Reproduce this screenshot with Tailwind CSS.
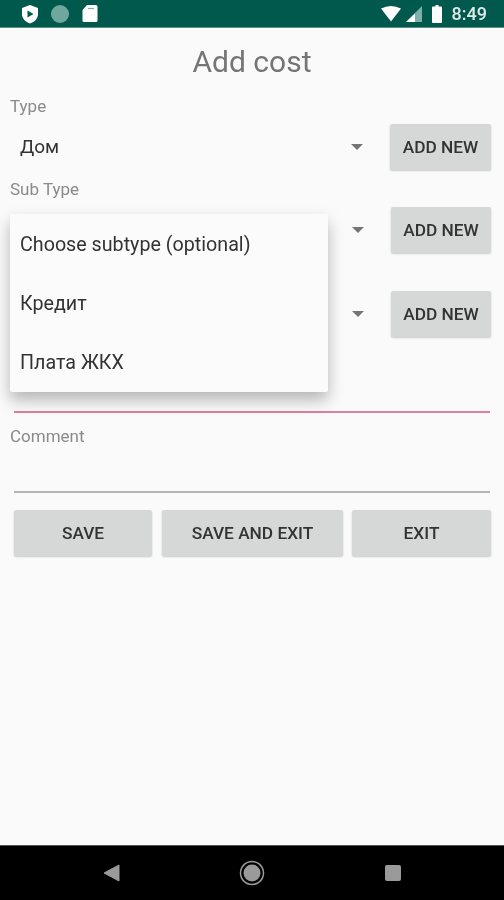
<!DOCTYPE html>
<html lang="en">
<head>
  <meta charset="UTF-8">
  <title>Add cost</title>
  <script src="https://cdn.jsdelivr.net/npm/@tailwindcss/browser@4"></script>
</head>
<body class="bg-[#fafafa] font-['Roboto',sans-serif] text-[#212121]">
  <div class="relative w-[504px] h-[900px] overflow-hidden flex flex-col blur-[0.5px]">
    <!-- status bar -->
    <div class="h-[28px] shrink-0 bg-[#00594c] border-b border-[#5d8f86] flex items-center text-white">
      <svg class="ml-[21px]" width="18" height="20" viewBox="0 0 18 20"><path d="M9 1l8 3v6c0 4.500-3.400 8-8 9.500C4.400 18 1 14.500 1 10V4z" fill="#fff"/><path d="M6.500 6.500v7l6-3.500z" fill="#00594c"/></svg>
      <div class="ml-[12px] w-[18px] h-[18px] rounded-full bg-[#6fa79d]"></div>
      <svg class="ml-[13px]" width="16" height="19" viewBox="0 0 16 19"><path d="M5 1h9a1.500 1.500 0 0 1 1.500 1.500v14a1.500 1.500 0 0 1-1.500 1.500H2a1.500 1.500 0 0 1-1.500-1.500V6z" fill="#fff"/><path d="M6 4.500h6" stroke="#7fb0a6" stroke-width="1.200"/></svg>
      <svg class="ml-auto" width="20" height="16" viewBox="0 0 20 16"><path d="M0 2.500Q10-2.500 20 2.500L10 15.500z" fill="#fff"/></svg>
      <svg class="ml-[5px]" width="16" height="16" viewBox="0 0 16 16"><path d="M16 0v16H0z" fill="#7fb0a6"/><path d="M9 7.500V16H0z" fill="#fff"/></svg>
      <svg class="ml-[10px]" width="10" height="18" viewBox="0 0 10 18"><path d="M3.500 0h3v1.500H9a1 1 0 0 1 1 1V17a1 1 0 0 1-1 1H1a1 1 0 0 1-1-1V2.500a1 1 0 0 1 1-1h2.500z" fill="#fff"/></svg>
      <span class="ml-[10px] mr-[17px] text-[18px] font-medium text-[#dfeae8]">8:49</span>
    </div>

    <!-- form -->
    <div class="flex-1 flex flex-col">
      <h1 class="h-[66px] shrink-0 flex items-center justify-center text-[30px] font-normal text-[#757575]">Add cost</h1>

      <label class="h-[19px] mt-[3px] ml-[10px] text-[17px] leading-[19px] text-[#8a8a8a]">Type</label>
      <div class="mt-[8px] h-[46px] flex items-center">
        <span class="ml-[20px] text-[19px] text-[#333]">Дом</span>
        <span class="ml-auto mr-[27px] w-0 h-0 border-x-[6px] border-x-transparent border-t-[6px] border-t-[#757575]"></span>
        <button class="w-[101px] h-[46px] mr-[13px] pt-[1px] rounded-[2px] bg-[#d6d7d7] shadow-[0_1px_2px_rgba(0,0,0,0.2)] text-[17.300px] font-medium text-[#333]">ADD NEW</button>
      </div>

      <label class="h-[19px] mt-[10px] ml-[10px] text-[17px] leading-[19px] text-[#8a8a8a]">Sub Type</label>
      <div class="mt-[8px] h-[46px] flex items-center">
        <span class="ml-auto mr-[27px] w-0 h-0 border-x-[6px] border-x-transparent border-t-[6px] border-t-[#757575]"></span>
        <button class="w-[100px] h-[46px] mr-[13px] pt-[1px] rounded-[2px] bg-[#d6d7d7] shadow-[0_1px_2px_rgba(0,0,0,0.2)] text-[17.300px] font-medium text-[#333]">ADD NEW</button>
      </div>

      <div class="mt-[38px] h-[46px] flex items-center">
        <span class="ml-auto mr-[27px] w-0 h-0 border-x-[6px] border-x-transparent border-t-[6px] border-t-[#757575]"></span>
        <button class="w-[100px] h-[46px] mr-[13px] pt-[1px] rounded-[2px] bg-[#d6d7d7] shadow-[0_1px_2px_rgba(0,0,0,0.2)] text-[17.300px] font-medium text-[#333]">ADD NEW</button>
      </div>

      <div class="mt-[74px] mx-[14px] h-[2px] bg-[#de7f9b]"></div>

      <label class="mt-[14px] h-[19px] ml-[10px] text-[17px] leading-[19px] text-[#8a8a8a]">Comment</label>
      <div class="mt-[45px] mx-[14px] h-[2px] bg-[#b5b5b5]"></div>

      <div class="mt-[17px] ml-[14px] flex">
        <button class="w-[138px] h-[46px] pt-[1px] rounded-[2px] bg-[#d6d7d7] shadow-[0_1px_2px_rgba(0,0,0,0.2)] text-[17.300px] font-medium text-[#333]">SAVE</button>
        <button class="ml-[10px] w-[181px] h-[46px] pt-[1px] rounded-[2px] bg-[#d6d7d7] shadow-[0_1px_2px_rgba(0,0,0,0.2)] text-[17.300px] font-medium text-[#333]">SAVE AND EXIT</button>
        <button class="ml-[9px] w-[139px] h-[46px] pt-[1px] rounded-[2px] bg-[#d6d7d7] shadow-[0_1px_2px_rgba(0,0,0,0.2)] text-[17.300px] font-medium text-[#333]">EXIT</button>
      </div>
    </div>

    <!-- nav bar -->
    <div class="h-[55px] shrink-0 bg-black border-t border-[#555] flex items-center">
      <svg class="ml-[103px]" width="17" height="18" viewBox="0 0 17 18"><path d="M16 1v16L1 9z" fill="#9a9a9a" stroke="#9a9a9a" stroke-linejoin="round"/></svg>
      <svg class="ml-[119px]" width="26" height="26" viewBox="0 0 26 26"><circle cx="13" cy="13" r="11.500" fill="none" stroke="#9a9a9a" stroke-width="1.500"/><circle cx="13" cy="13" r="8.500" fill="#9a9a9a"/></svg>
      <div class="ml-[120px] w-[16px] h-[16px] rounded-[2px] bg-[#9a9a9a]"></div>
    </div>

    <!-- open spinner menu -->
    <ul class="absolute left-[10px] top-[214px] w-[318px] h-[178px] bg-[#fbfbfb] shadow-[0_8px_16px_rgba(0,0,0,0.28)] rounded-[2px] flex flex-col text-[19.700px] text-[#333]">
      <li class="h-[60px] pl-[10px] pt-[2px] flex items-center">Choose subtype (optional)</li>
      <li class="h-[59px] pl-[10px] flex items-center">Кредит</li>
      <li class="h-[59px] pl-[10px] pt-[1px] flex items-center">Плата ЖКХ</li>
    </ul>
  </div>
</body>
</html>
